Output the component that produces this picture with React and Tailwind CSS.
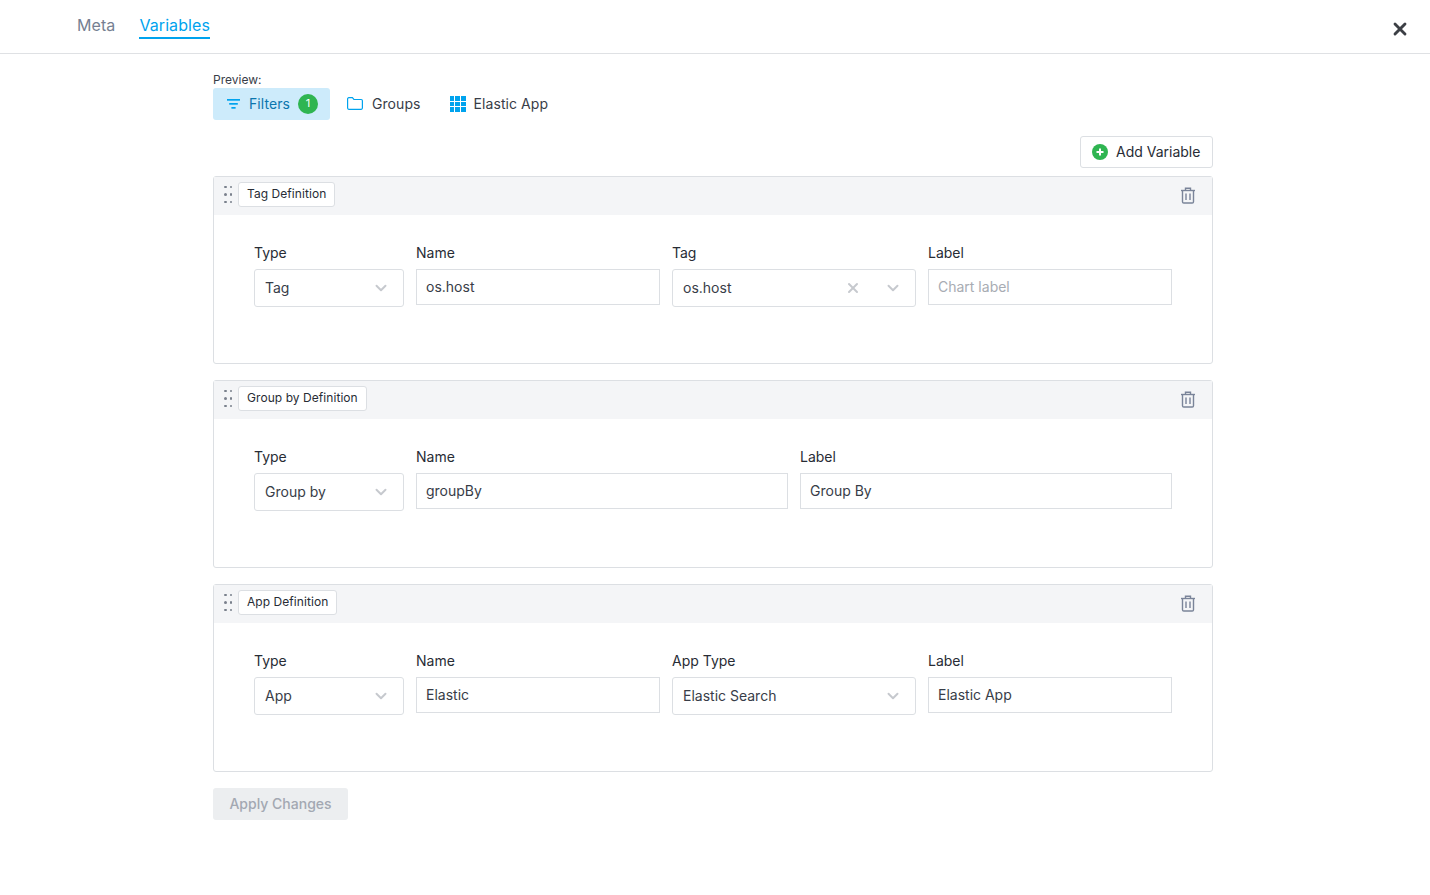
import { ChevronDown, X } from "lucide-react";

function Grip() {
    return (
        <div className="grid grid-cols-2 gap-x-[3px] gap-y-[5px] w-2">
            {[0, 1, 2, 3, 4, 5].map((i) => (
                <span key={i} className="w-[2.5px] h-[2.5px] rounded-full bg-[#7a808c]" />
            ))}
        </div>
    );
}

function TrashIcon() {
    return (
        <svg width="16" height="17" viewBox="0 0 16 17" fill="none" stroke="#7a8499" strokeWidth="1.4">
            <path d="M1 3.5h14" />
            <path d="M5.5 3.5V1.2h5v2.3" />
            <path d="M2.5 3.5v11.2c0 .8.5 1.3 1.3 1.3h8.4c.8 0 1.3-.5 1.3-1.3V3.5" />
            <path d="M6 6.5v6.5M10 6.5v6.5" />
        </svg>
    );
}

function Field({ label, width, children }) {
    return (
        <div className={`${width} flex flex-col`}>
            <label className="text-sm leading-4 mb-2 text-[#282c35]">{label}</label>
            {children}
        </div>
    );
}

function TextInput({ value, placeholder }) {
    return (
        <div className="h-9 border border-[#dcdfe3] bg-white px-[9px] flex items-center text-sm">
            {value ? <span className="text-[#383d48]">{value}</span> : <span className="text-[#a8acb3]">{placeholder}</span>}
        </div>
    );
}

function SelectBox({ value, clearable }) {
    return (
        <div className="h-[38px] border border-[#dcdfe3] rounded-[3px] bg-white pl-[10px] pr-[13px] flex items-center text-sm text-[#383d48]">
            <span className="flex-1">{value}</span>
            {clearable && <X size={16} strokeWidth={3} className="text-[#c6c9ce] mr-[23px]" />}
            <ChevronDown size={18} strokeWidth={2.6} className="text-[#c6c9ce]" />
        </div>
    );
}

function VariableCard({ title, children }) {
    return (
        <div className="h-[188px] border border-[#dcdfe3] rounded-[3px] bg-white">
            <div className="h-[38px] bg-[#f4f5f7] flex items-center pl-[10px] pr-4 pb-[3px]">
                <Grip />
                <span className="ml-[6px] h-[25px] px-2 pb-px flex items-center text-xs tracking-[0.005em] bg-white border border-[#dcdfe3] rounded-[3px] text-[#282c35]">
                    {title}
                </span>
                <div className="ml-auto pt-px"><TrashIcon /></div>
            </div>
            <div className="flex gap-3 px-10 pt-[30px]">{children}</div>
        </div>
    );
}

export default function App() {
    return (
        <div className="min-h-[895px] bg-white relative" style={{ fontFamily: "Inter, 'Noto Sans', sans-serif" }}>
            <div className="h-[54px] border-b border-[#dfe1e4] flex items-start pl-[77px] gap-6">
                <span className="mt-[15px] text-base leading-5 tracking-[0.005em] text-[#767f92]">Meta</span>
                <span className="mt-[15px] text-base leading-5 tracking-[0.005em] text-[#00a3ee] border-b-2 border-[#00a3ee] pb-[2px]">Variables</span>
                <X size={20} strokeWidth={3.4} className="absolute left-[1390px] top-[19px] text-[#3c3f45]" />
            </div>

            <div className="w-[1000px] ml-[213px] pt-[18px]">
                <div className="text-xs leading-[15px] text-[#383d48] mb-px">Preview:</div>
                <div className="flex items-center text-sm tracking-[0.005em] text-[#383d48]">
                    <div className="h-8 w-[117px] bg-[#cdebfb] rounded-[3px] flex items-center pl-[14px] text-[#0b76ae]">
                        <svg width="13" height="10" viewBox="0 0 13 10" fill="#00a3ee">
                            <rect x="0" y="0" width="13" height="1.7" />
                            <rect x="2.2" y="4" width="8.6" height="1.7" />
                            <rect x="4.4" y="8" width="4.2" height="1.7" />
                        </svg>
                        <span className="ml-[9px]">Filters</span>
                        <span className="ml-2 w-5 h-5 rounded-full bg-[#2fb551] text-white text-[11px] flex items-center justify-center">1</span>
                    </div>
                    <svg className="ml-[17px] -mt-px" width="16" height="13" viewBox="0 0 16 13" fill="none" stroke="#00a3ee" strokeWidth="1.2">
                        <path d="M.6 2C.6 1.2 1.1.7 1.8.7h3.6l1.5 1.8h7.3c.7 0 1.2.5 1.2 1.2v7.4c0 .7-.5 1.2-1.2 1.2H1.8c-.7 0-1.2-.5-1.2-1.2V2z" />
                    </svg>
                    <span className="ml-[9px]">Groups</span>
                    <div className="ml-[29px] grid grid-cols-3 gap-px w-4">
                        {[0, 1, 2, 3, 4, 5, 6, 7, 8].map((i) => (
                            <span key={i} className="h-[4.67px] bg-[#00a3ee]" />
                        ))}
                    </div>
                    <span className="ml-2">Elastic App</span>
                </div>

                <div className="flex justify-end mt-4 mb-2">
                    <div className="h-8 w-[133px] border border-[#dcdfe3] rounded-[3px] flex items-center pl-[11px] text-sm text-[#282c35]">
                        <svg width="16" height="16" viewBox="0 0 16 16">
                            <circle cx="8" cy="8" r="8" fill="#2fb551" />
                            <path d="M8 4.5v7M4.5 8h7" stroke="#fff" strokeWidth="2" />
                        </svg>
                        <span className="ml-2">Add Variable</span>
                    </div>
                </div>

                <div className="flex flex-col gap-4">
                    <VariableCard title="Tag Definition">
                        <Field label="Type" width="w-[150px]"><SelectBox value="Tag" /></Field>
                        <Field label="Name" width="flex-1"><TextInput value="os.host" /></Field>
                        <Field label="Tag" width="flex-1"><SelectBox value="os.host" clearable /></Field>
                        <Field label="Label" width="flex-1"><TextInput placeholder="Chart label" /></Field>
                    </VariableCard>
                    <VariableCard title="Group by Definition">
                        <Field label="Type" width="w-[150px]"><SelectBox value="Group by" /></Field>
                        <Field label="Name" width="flex-1"><TextInput value="groupBy" /></Field>
                        <Field label="Label" width="flex-1"><TextInput value="Group By" /></Field>
                    </VariableCard>
                    <VariableCard title="App Definition">
                        <Field label="Type" width="w-[150px]"><SelectBox value="App" /></Field>
                        <Field label="Name" width="flex-1"><TextInput value="Elastic" /></Field>
                        <Field label="App Type" width="flex-1"><SelectBox value="Elastic Search" /></Field>
                        <Field label="Label" width="flex-1"><TextInput value="Elastic App" /></Field>
                    </VariableCard>
                </div>

                <div className="mt-4 h-8 w-[135px] bg-[#eceef0] rounded-[3px] flex items-center justify-center text-sm font-medium text-[#a3a8b2]">
                    Apply Changes
                </div>
            </div>
        </div>
    );
}
